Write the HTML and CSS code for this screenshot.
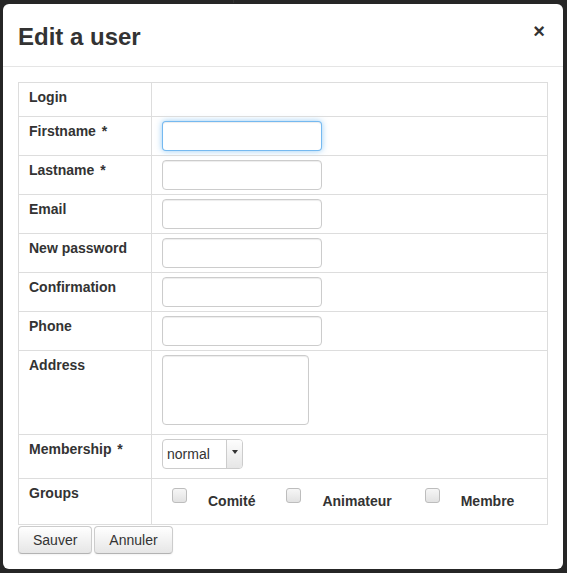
FILE: index.html
```html
<!DOCTYPE html>
<html>
<head>
<meta charset="utf-8">
<link rel="stylesheet" href="styles.css">
</head>
<body>
<div class="page">
  <div class="page-head">
    <span class="ph-col1">Lastname &#8964;</span>
    <span class="ph-col2">Balance &#8964;</span>
  </div>
</div>
<div class="modal">
  <div class="modal-header">
    <h3 class="modal-title">Edit a user</h3>
    <button class="close" type="button">&times;</button>
  </div>
  <div class="modal-body">
    <table class="form-table">
      <colgroup><col class="col-label"><col></colgroup>
      <tr>
        <td class="lbl">Login</td>
        <td><div class="login-val"></div></td>
      </tr>
      <tr>
        <td class="lbl">Firstname <span class="req">*</span></td>
        <td><input class="field focus" type="text"></td>
      </tr>
      <tr>
        <td class="lbl">Lastname <span class="req">*</span></td>
        <td><input class="field" type="text"></td>
      </tr>
      <tr>
        <td class="lbl">Email</td>
        <td><input class="field" type="text"></td>
      </tr>
      <tr>
        <td class="lbl">New password</td>
        <td><input class="field" type="password"></td>
      </tr>
      <tr>
        <td class="lbl">Confirmation</td>
        <td><input class="field" type="password"></td>
      </tr>
      <tr>
        <td class="lbl">Phone</td>
        <td><input class="field" type="text"></td>
      </tr>
      <tr>
        <td class="lbl">Address</td>
        <td><textarea class="area"></textarea></td>
      </tr>
      <tr>
        <td class="lbl">Membership <span class="req">*</span></td>
        <td>
          <div class="select">
            <span class="select-text">normal</span>
            <span class="select-btn"><span class="caret"></span></span>
          </div>
        </td>
      </tr>
      <tr>
        <td class="lbl">Groups</td>
        <td>
          <div class="groups">
            <label class="grp"><input type="checkbox" class="cb"><span class="grp-text">Comité</span></label>
            <label class="grp"><input type="checkbox" class="cb"><span class="grp-text">Animateur</span></label>
            <label class="grp"><input type="checkbox" class="cb"><span class="grp-text">Membre</span></label>
          </div>
        </td>
      </tr>
    </table>
    <div class="actions">
      <button class="btn" type="button">Sauver</button>
      <button class="btn" type="button">Annuler</button>
    </div>
  </div>
</div>
</body>
</html>
```

FILE: styles.css
```css
html, body {
  margin: 0;
  padding: 0;
}
body {
  background: #262626;
  font-family: "Liberation Sans", Arial, sans-serif;
  font-size: 14px;
  line-height: 20px;
  color: #333;
  width: 567px;
  height: 573px;
  overflow: hidden;
  position: relative;
}
.page-head {
  margin-top: -15px;
  height: 18px;
  display: flex;
  font-weight: bold;
  color: #4c4c4c;
  font-size: 14px;
  line-height: 18px;
}
.ph-col1 {
  width: 245px;
  margin-left: -12px;
  border-right: 1px solid #333;
}
.ph-col2 {
  margin-left: 164px;
}
.modal {
  position: absolute;
  left: 3px;
  top: 4px;
  width: 560px;
  background: #fff;
  border-radius: 6px;
}
.modal-header {
  display: flex;
  justify-content: space-between;
  align-items: flex-start;
  padding: 17px 15px 13px 15px;
  border-bottom: 1px solid #e5e5e5;
}
.modal-title {
  margin: 0;
  font-size: 24px;
  line-height: 32px;
  font-weight: bold;
  color: #333;
}
.close {
  border: 0;
  background: none;
  padding: 0;
  margin: 0 3px 0 0;
  font-family: "Liberation Sans", Arial, sans-serif;
  font-size: 20px;
  line-height: 20px;
  font-weight: bold;
  color: #333;
  cursor: pointer;
}
.modal-body {
  padding: 15px;
}
.form-table {
  width: 530px;
  border-collapse: collapse;
  table-layout: fixed;
}
.col-label {
  width: 133px;
}
.form-table td {
  border: 1px solid #dddddd;
  padding: 4px 10px;
  vertical-align: top;
  line-height: 20px;
}
.lbl {
  font-weight: bold;
  color: #333;
}
.req {
  font-weight: bold;
  margin-left: 2px;
}
.login-val {
  height: 25px;
}
.field {
  display: block;
  box-sizing: border-box;
  width: 160px;
  height: 30px;
  margin: 0;
  padding: 4px 6px;
  border: 1px solid #cccccc;
  border-radius: 4px;
  font-family: "Liberation Sans", Arial, sans-serif;
  font-size: 14px;
  background: #fff;
  box-shadow: inset 0 1px 1px rgba(0, 0, 0, 0.075);
  outline: none;
}
.field.focus {
  border-color: rgba(82, 168, 236, 0.8);
  box-shadow: inset 0 1px 1px rgba(0, 0, 0, 0.075), 0 0 6px rgba(82, 168, 236, 0.6);
}
.area {
  display: block;
  box-sizing: border-box;
  width: 147px;
  height: 70px;
  margin: 0 0 5px 0;
  padding: 4px 6px;
  border: 1px solid #cccccc;
  border-radius: 4px;
  resize: none;
  font-family: "Liberation Sans", Arial, sans-serif;
  box-shadow: inset 0 1px 1px rgba(0, 0, 0, 0.075);
  outline: none;
}
.select {
  box-sizing: border-box;
  width: 81px;
  height: 30px;
  margin-bottom: 5px;
  border: 1px solid #cccccc;
  border-radius: 4px;
  display: flex;
  overflow: hidden;
  background: #fff;
}
.select-text {
  flex: 1;
  padding-left: 4px;
  line-height: 28px;
  font-size: 14px;
  color: #333;
}
.select-btn {
  width: 15px;
  border-left: 1px solid #cccccc;
  background: linear-gradient(#fdfdfd, #e6e6e6);
  display: flex;
  justify-content: center;
  align-items: flex-start;
}
.caret {
  width: 0;
  height: 0;
  margin-top: 10px;
  border-left: 3.5px solid transparent;
  border-right: 3.5px solid transparent;
  border-top: 4px solid #333;
}
.groups {
  display: flex;
  align-items: flex-start;
  padding-bottom: 9px;
}
.grp {
  display: flex;
  align-items: flex-start;
  margin-right: 21px;
  font-weight: bold;
}
.grp:nth-child(2) {
  margin-right: 23px;
}
.cb {
  appearance: none;
  -webkit-appearance: none;
  box-sizing: border-box;
  width: 15px;
  height: 15px;
  margin: 5px 0 0 10px;
  border: 1px solid #bdbdbd;
  border-radius: 3px;
  background: linear-gradient(#f6f6f6, #e2e2e2);
}
.grp-text {
  margin-left: 21px;
  margin-top: 8px;
  line-height: 20px;
}
.actions {
  display: flex;
  gap: 2px;
  margin-top: 1px;
}
.btn {
  box-sizing: border-box;
  height: 28px;
  padding: 3px 14px;
  font-family: "Liberation Sans", Arial, sans-serif;
  font-size: 14px;
  line-height: 20px;
  color: #333;
  background: linear-gradient(#ffffff, #e6e6e6);
  border: 1px solid #cccccc;
  border-bottom-color: #b3b3b3;
  border-radius: 4px;
  box-shadow: inset 0 1px 0 rgba(255, 255, 255, 0.2), 0 1px 2px rgba(0, 0, 0, 0.05);
  cursor: pointer;
}
```
